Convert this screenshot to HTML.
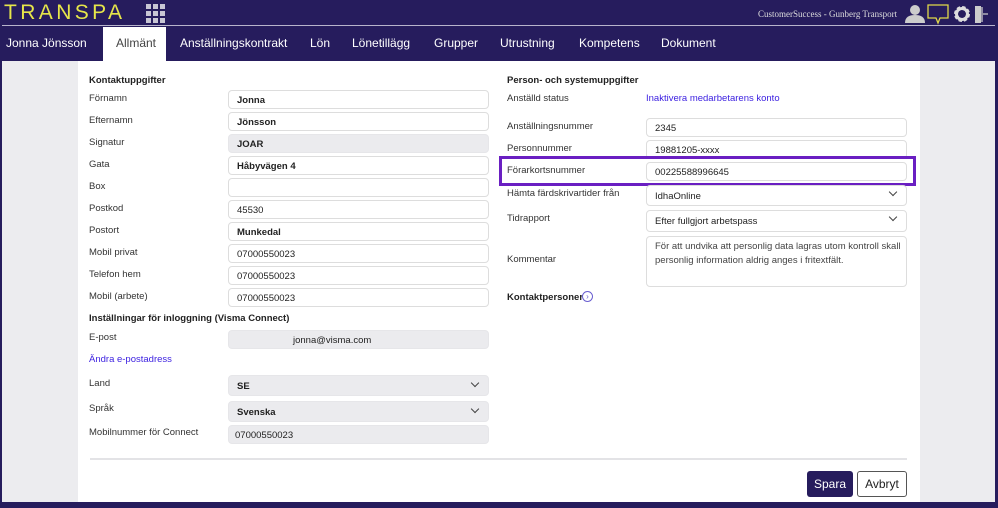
<!DOCTYPE html>
<html><head><meta charset="utf-8"><style>
*{margin:0;padding:0;box-sizing:border-box}
body{width:998px;height:508px;overflow:hidden;background:#ececef;font-family:"Liberation Sans",sans-serif;position:relative}
.a{position:absolute}
.top{left:0;top:0;width:998px;height:25px;background:#261c5d}
.line{left:0;top:25px;width:998px;height:1px;background:#b8b4cc}
.nav{left:0;top:26px;width:998px;height:35px;background:#261c5d}
.nav span{position:absolute;top:10px;color:#fff;font-size:12px}
.tab{left:103px;top:27px;width:63px;height:34px;background:#fff}
.panel{left:78px;top:61px;width:842px;height:441px;background:#fff}
.frame{left:0;top:0;width:998px;height:508px;border-left:2px solid #261c5d;border-right:3px solid #261c5d;border-bottom:6px solid #261c5d}
.lb{font-size:9.5px;color:#333}
.h{font-size:9.5px;font-weight:bold;color:#222}
.in{height:19px;border:1px solid #ddd;border-radius:4px;background:#fff;font-size:9.5px;color:#222;padding:4px 0 0 8px;font-weight:bold}
.g{background:#ebebee;border-color:#e6e6e9}
.r{font-weight:normal}
.chev{position:absolute;right:10px;top:3px;width:6px;height:6px;border-right:1.3px solid #444;border-bottom:1.3px solid #444;transform:rotate(45deg)}
</style></head><body>
<div class="a top"></div>
<div class="a" style="left:4px;top:1px;font-size:21px;letter-spacing:3.4px;color:#e6e64a;line-height:24px">TRANSPA</div>
<div class="a" style="left:146px;top:4px;width:19px;height:19px;background:repeating-linear-gradient(90deg,#c8c6d4 0 5px,transparent 5px 7px);-webkit-mask:repeating-linear-gradient(0deg,#000 0 5px,transparent 5px 7px)"></div>
<div class="a" style="left:758px;top:9px;font-family:'Liberation Serif',serif;font-size:9px;color:#ddd">CustomerSuccess - Gunberg Transport</div>
<svg class="a" style="left:903px;top:3px" width="95" height="22" viewBox="0 0 95 22">
<circle cx="12" cy="7" r="5" fill="#ccc"/><path d="M2 20c0-6 4-8 10-8s10 2 10 8z" fill="#ccc"/>
<path d="M25 2h20v13h-8l-2 5-2-5h-8z" fill="none" stroke="#e0d84a" stroke-width="1.3"/>
<circle cx="59" cy="11" r="6" fill="none" stroke="#ddd" stroke-width="4" stroke-dasharray="3 1.7"/><circle cx="59" cy="11" r="5.5" fill="none" stroke="#ddd" stroke-width="3"/>
<path d="M72 3h6v17h-6z" fill="#ccc"/><path d="M79 4v15M80 11h5" stroke="#ccc" stroke-width="1.3"/></svg>
<div class="a line"></div>
<div class="a nav"><span style="left:6px">Jonna Jönsson</span><span style="left:180px">Anställningskontrakt</span><span style="left:310px">Lön</span><span style="left:352px">Lönetillägg</span><span style="left:434px">Grupper</span><span style="left:500px">Utrustning</span><span style="left:579px">Kompetens</span><span style="left:661px">Dokument</span></div>
<div class="a tab"></div>
<div class="a" style="left:116px;top:36px;font-size:12px;color:#444">Allmänt</div>
<div class="a panel"></div>

<div class="a h" style="left:89px;top:75px">Kontaktuppgifter</div>
<div class="a lb" style="left:89px;top:93px">Förnamn</div><div class="a in" style="left:228px;top:90px;width:261px">Jonna</div>
<div class="a lb" style="left:89px;top:115px">Efternamn</div><div class="a in" style="left:228px;top:112px;width:261px">Jönsson</div>
<div class="a lb" style="left:89px;top:137px">Signatur</div><div class="a in g" style="left:228px;top:134px;width:261px">JOAR</div>
<div class="a lb" style="left:89px;top:159px">Gata</div><div class="a in" style="left:228px;top:156px;width:261px">Håbyvägen 4</div>
<div class="a lb" style="left:89px;top:181px">Box</div><div class="a in" style="left:228px;top:178px;width:261px"></div>
<div class="a lb" style="left:89px;top:203px">Postkod</div><div class="a in r" style="left:228px;top:200px;width:261px">45530</div>
<div class="a lb" style="left:89px;top:225px">Postort</div><div class="a in" style="left:228px;top:222px;width:261px">Munkedal</div>
<div class="a lb" style="left:89px;top:247px">Mobil privat</div><div class="a in r" style="left:228px;top:244px;width:261px">07000550023</div>
<div class="a lb" style="left:89px;top:269px">Telefon hem</div><div class="a in r" style="left:228px;top:266px;width:261px">07000550023</div>
<div class="a lb" style="left:89px;top:291px">Mobil (arbete)</div><div class="a in r" style="left:228px;top:288px;width:261px">07000550023</div>
<div class="a h" style="left:89px;top:313px">Inställningar för inloggning (Visma Connect)</div>
<div class="a lb" style="left:89px;top:332px">E-post</div><div class="a in g r" style="left:228px;top:330px;width:261px;padding-left:64px">jonna@visma.com</div>
<div class="a lb" style="left:89px;top:354px;color:#3a1ee0">Ändra e-postadress</div>
<div class="a lb" style="left:89px;top:378px">Land</div><div class="a in g" style="left:228px;top:375px;width:261px;height:21px;padding-top:5px">SE<i class="chev" style="top:4px"></i></div>
<div class="a lb" style="left:89px;top:403px">Språk</div><div class="a in g" style="left:228px;top:401px;width:261px;height:21px;padding-top:5px">Svenska<i class="chev" style="top:4px"></i></div>
<div class="a lb" style="left:89px;top:427px">Mobilnummer för Connect</div><div class="a in g r" style="left:228px;top:425px;width:261px;padding-left:6px">07000550023</div>

<div class="a h" style="left:507px;top:75px">Person- och systemuppgifter</div>
<div class="a lb" style="left:507px;top:93px">Anställd status</div>
<div class="a lb" style="left:646px;top:93px;color:#3a1ee0">Inaktivera medarbetarens konto</div>
<div class="a lb" style="left:507px;top:121px">Anställningsnummer</div><div class="a in r" style="left:646px;top:118px;width:261px">2345</div>
<div class="a lb" style="left:507px;top:143px">Personnummer</div><div class="a in r" style="left:646px;top:140px;width:261px">19881205-xxxx</div>
<div class="a" style="left:499px;top:156px;width:417px;height:30px;border:3px solid #6a1fc2"></div>
<div class="a lb" style="left:507px;top:165px">Förarkortsnummer</div><div class="a in r" style="left:646px;top:162px;width:261px">00225588996645</div>
<div class="a lb" style="left:507px;top:188px">Hämta färdskrivartider från</div><div class="a in r" style="left:646px;top:185px;width:261px;height:21px;padding-top:5px">IdhaOnline<i class="chev"></i></div>
<div class="a lb" style="left:507px;top:213px">Tidrapport</div><div class="a in r" style="left:646px;top:210px;width:261px;height:22px;padding-top:5px">Efter fullgjort arbetspass<i class="chev"></i></div>
<div class="a lb" style="left:507px;top:254px">Kommentar</div><div class="a in r" style="left:646px;top:236px;width:261px;height:51px;line-height:14px;padding-top:3px;color:#444">För att undvika att personlig data lagras utom kontroll skall personlig information aldrig anges i fritextfält.</div>
<div class="a h" style="left:507px;top:292px">Kontaktpersoner</div>
<div class="a" style="left:582px;top:291px;width:11px;height:11px;border:1px solid #6a5fd0;border-radius:50%;font-size:8px;color:#6a5fd0;line-height:9px;text-align:center">›</div>

<div class="a" style="left:90px;top:458px;width:817px;height:2px;background:#e3e3e6"></div>
<div class="a" style="left:807px;top:471px;width:46px;height:26px;background:#261c5d;border-radius:3px;color:#fff;font-size:12px;text-align:center;line-height:26px">Spara</div>
<div class="a" style="left:857px;top:471px;width:50px;height:26px;border:1px solid #555;border-radius:3px;color:#222;font-size:12px;text-align:center;line-height:24px">Avbryt</div>
<div class="a frame"></div>
</body></html>
